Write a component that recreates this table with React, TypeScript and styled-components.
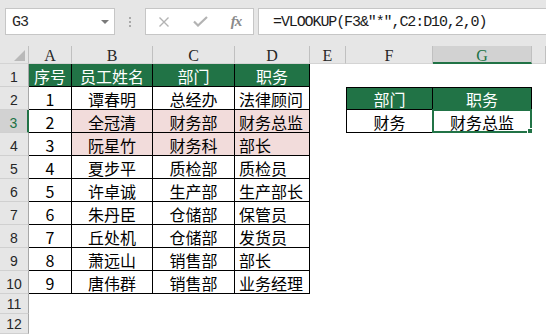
import styled, { createGlobalStyle } from "styled-components";

const GlobalStyle = createGlobalStyle`
  html, body {
    margin: 0;
    padding: 0;
    background: #ffffff;
  }
  body {
    font-family: "Noto Sans CJK SC", "Noto Sans", sans-serif;
  }
`;

const Window = styled.div`
  width: 546px;
  height: 334px;
  overflow: hidden;
  display: flex;
  flex-direction: column;
  background: #ffffff;
`;

const FormulaBar = styled.div`
  height: 46px;
  box-sizing: border-box;
  padding: 8px 0 0 5px;
  display: flex;
  align-items: flex-start;
  background: #e6e6e6;
`;

const NameBox = styled.div`
  width: 110px;
  height: 27px;
  box-sizing: border-box;
  border: 1px solid #c6c6c6;
  background: #ffffff;
  display: flex;
  align-items: center;
  justify-content: space-between;
  padding: 1px 5px 0 6px;
  font-family: "Liberation Mono", monospace;
  font-size: 15px;
  letter-spacing: -1px;
  color: #262626;
`;

const DropArrow = styled.span`
  width: 0;
  height: 0;
  border-left: 4px solid transparent;
  border-right: 4px solid transparent;
  border-top: 4px solid #7a7a7a;
`;

const Grip = styled.div`
  width: 2px;
  height: 27px;
  margin: 0 14px;
  display: flex;
  flex-direction: column;
  justify-content: center;
  gap: 2px;

  span {
    width: 2px;
    height: 2px;
    background: #a9a9a9;
  }
`;

const FxButtons = styled.div`
  width: 109px;
  height: 27px;
  box-sizing: border-box;
  border: 1px solid #c6c6c6;
  background: #ffffff;
  display: grid;
  grid-template-columns: repeat(3, 36px);
  align-items: center;
  justify-items: center;
`;

const FxLabel = styled.span`
  font-family: "Liberation Serif", serif;
  font-style: italic;
  font-weight: bold;
  font-size: 15px;
  letter-spacing: -1px;
  color: #8a8a8a;
`;

const FormulaInput = styled.div`
  flex: 1;
  height: 27px;
  margin: 0 -2px 0 4px;
  box-sizing: border-box;
  border: 1px solid #c6c6c6;
  background: #ffffff;
  display: flex;
  align-items: center;
  padding: 1px 0 0 14px;
  font-family: "Liberation Mono", monospace;
  font-size: 15px;
  letter-spacing: -1.1px;
  color: #1a1a1a;
  white-space: nowrap;
`;

const Sheet = styled.div`
  display: grid;
  grid-template-columns: 29px 43px 81px 82px 75px 36px 87px 99px 1fr;
  grid-template-rows: 18px repeat(10, 23px) 20px 20px;
  background: #ffffff;
`;

const Corner = styled.div`
  box-sizing: border-box;
  background: #e6e6e6;
  border-right: 1px solid #c0c0c0;
  border-bottom: 1px solid #d4d4d4;
  display: flex;
  align-items: flex-end;
  justify-content: flex-end;
  padding: 0 3px 2px 0;

  &::after {
    content: "";
    border-left: 11px solid transparent;
    border-bottom: 11px solid #b9b9b9;
  }
`;

const ColHead = styled.div<{ $active?: boolean }>`
  box-sizing: border-box;
  background: ${(p) => (p.$active ? "#d2d2d2" : "#e6e6e6")};
  border-right: 1px solid #c0c0c0;
  border-bottom: ${(p) => (p.$active ? "2px solid #217346" : "1px solid #d4d4d4")};
  color: ${(p) => (p.$active ? "#217346" : "#262626")};
  font-family: "Liberation Serif", serif;
  font-size: 16px;
  line-height: 1;
  display: flex;
  align-items: center;
  justify-content: center;
  padding-top: ${(p) => (p.$active ? "3px" : "2px")};
`;

const RowHead = styled.div<{ $active?: boolean }>`
  box-sizing: border-box;
  background: ${(p) => (p.$active ? "#d2d2d2" : "#e6e6e6")};
  border-bottom: 1px solid #d0d0d0;
  border-right: ${(p) => (p.$active ? "2px solid #217346" : "1px solid #a8a8a8")};
  color: ${(p) => (p.$active ? "#217346" : "#262626")};
  font-family: "Liberation Sans", sans-serif;
  font-size: 14px;
  line-height: 1;
  display: flex;
  align-items: flex-end;
  justify-content: center;
  padding-bottom: 2px;
`;

type Tone = "plain" | "head" | "pink";

const toneBg: Record<Tone, string> = {
  plain: "#ffffff",
  head: "#217346",
  pink: "#f2dcdb",
};

const Cell = styled.div<{
  $tone: Tone;
  $left?: boolean;
  $boxed?: boolean;
  $edgeLeft?: boolean;
  $edgeTop?: boolean;
}>`
  position: relative;
  box-sizing: border-box;
  background: ${(p) => toneBg[p.$tone]};
  color: ${(p) => (p.$tone === "head" ? "#ffffff" : "#000000")};
  border-right: ${(p) => (p.$boxed ? "1px solid #000" : "none")};
  border-bottom: ${(p) => (p.$boxed ? "1px solid #000" : "none")};
  border-left: ${(p) => (p.$edgeLeft ? "1px solid #000" : "none")};
  border-top: ${(p) => (p.$edgeTop ? "1px solid #000" : "none")};
  font-size: 16px;
  line-height: 20px;
  display: flex;
  align-items: center;
  justify-content: ${(p) => (p.$left ? "flex-start" : "center")};
  padding: 1px 0 0 ${(p) => (p.$left ? "4px" : "0")};
  white-space: nowrap;
`;

const Selection = styled.div`
  position: absolute;
  top: -1px;
  left: -1px;
  right: -1px;
  bottom: -1px;
  border: 2px solid #217346;
  pointer-events: none;

  &::after {
    content: "";
    position: absolute;
    right: -4px;
    bottom: -4px;
    width: 5px;
    height: 5px;
    background: #217346;
    border: 1px solid #ffffff;
  }
`;

const columns = ["A", "B", "C", "D", "E", "F", "G", "H"];

const staff: (string | number)[][] = [
  ["序号", "员工姓名", "部门", "职务"],
  [1, "谭春明", "总经办", "法律顾问"],
  [2, "全冠清", "财务部", "财务总监"],
  [3, "阮星竹", "财务科", "部长"],
  [4, "夏步平", "质检部", "质检员"],
  [5, "许卓诚", "生产部", "生产部长"],
  [6, "朱丹臣", "仓储部", "保管员"],
  [7, "丘处机", "仓储部", "发货员"],
  [8, "萧远山", "销售部", "部长"],
  [9, "唐伟群", "销售部", "业务经理"],
];

const lookup = [
  ["部门", "职务"],
  ["财务", "财务总监"],
];

const activeRow = 3;
const activeCol = 6;

type Spec = {
  text?: string | number;
  tone: Tone;
  left?: boolean;
  boxed?: boolean;
  edgeLeft?: boolean;
  edgeTop?: boolean;
};

const cellAt = (row: number, col: number): Spec => {
  if (row <= 10 && col <= 3) {
    const head = row === 1;
    const pink = (row === 3 || row === 4) && col >= 1;
    return {
      text: staff[row - 1][col],
      tone: head ? "head" : pink ? "pink" : "plain",
      left: col === 3 && !head,
      boxed: true,
    };
  }
  if ((row === 2 || row === 3) && (col === 5 || col === 6)) {
    return {
      text: lookup[row - 2][col - 5],
      tone: row === 2 ? "head" : "plain",
      boxed: true,
      edgeLeft: col === 5,
      edgeTop: row === 2,
    };
  }
  return { tone: "plain" };
};

const CrossIcon = () => (
  <svg width="12" height="10" viewBox="0 0 12 10">
    <path d="M1.5 0.5 L10.5 9.5 M10.5 0.5 L1.5 9.5" stroke="#b3b3b3" strokeWidth="1.4" fill="none" />
  </svg>
);

const CheckIcon = () => (
  <svg width="15" height="11" viewBox="0 0 15 11">
    <path d="M1 5.5 L5 9.5 L14 1" stroke="#b3b3b3" strokeWidth="2.2" fill="none" />
  </svg>
);

export default function App() {
  const rows = Array.from({ length: 12 }, (_, i) => i + 1);

  return (
    <Window>
      <GlobalStyle />
      <FormulaBar>
        <NameBox>
          G3
          <DropArrow />
        </NameBox>
        <Grip>
          <span />
          <span />
          <span />
        </Grip>
        <FxButtons>
          <CrossIcon />
          <CheckIcon />
          <FxLabel>fx</FxLabel>
        </FxButtons>
        <FormulaInput>=VLOOKUP(F3&"*",C2:D10,2,0)</FormulaInput>
      </FormulaBar>

      <Sheet>
        <Corner />
        {columns.map((c, i) => (
          <ColHead key={c} $active={i === activeCol}>
            {c === "H" ? "" : c}
          </ColHead>
        ))}
        {rows.map((r) => [
          <RowHead key={`h${r}`} $active={r === activeRow}>
            {r}
          </RowHead>,
          ...columns.map((c, ci) => {
            const s = cellAt(r, ci);
            return (
              <Cell
                key={`${c}${r}`}
                $tone={s.tone}
                $left={s.left}
                $boxed={s.boxed}
                $edgeLeft={s.edgeLeft}
                $edgeTop={s.edgeTop}
              >
                {s.text}
                {r === activeRow && ci === activeCol && <Selection />}
              </Cell>
            );
          }),
        ])}
      </Sheet>
    </Window>
  );
}
